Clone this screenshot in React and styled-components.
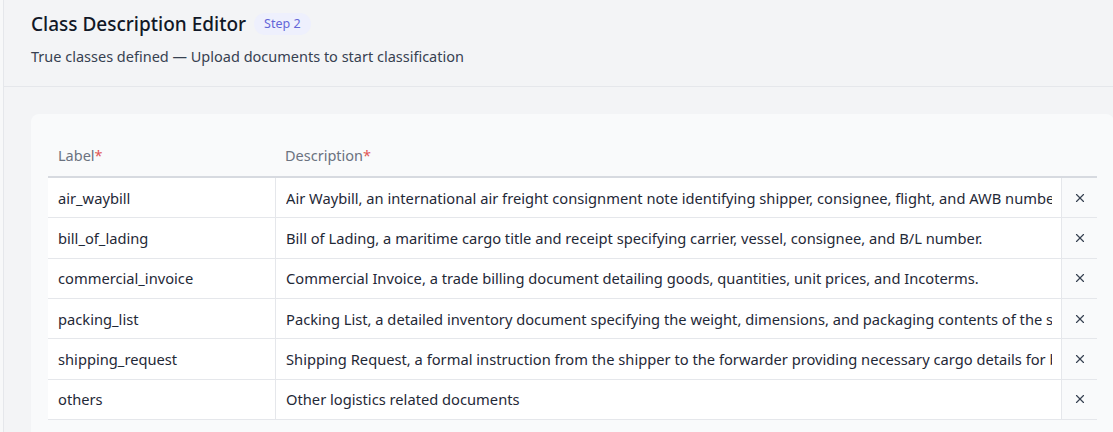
import React from 'react'
import styled, { createGlobalStyle } from 'styled-components'
import { X } from 'lucide-react'

const GlobalStyle = createGlobalStyle`
  html, body {
    margin: 0;
    padding: 0;
    background: #f3f4f6;
    overflow: hidden;
  }
  body {
    font-family: "Noto Sans", "Open Sans", sans-serif;
    color: #1f2937;
  }
`

const classes = [
  { label: 'air_waybill', description: 'Air Waybill, an international air freight consignment note identifying shipper, consignee, flight, and AWB number for tracking.' },
  { label: 'bill_of_lading', description: 'Bill of Lading, a maritime cargo title and receipt specifying carrier, vessel, consignee, and B/L number.' },
  { label: 'commercial_invoice', description: 'Commercial Invoice, a trade billing document detailing goods, quantities, unit prices, and Incoterms.' },
  { label: 'packing_list', description: 'Packing List, a detailed inventory document specifying the weight, dimensions, and packaging contents of the shipment.' },
  { label: 'shipping_request', description: 'Shipping Request, a formal instruction from the shipper to the forwarder providing necessary cargo details for booking.' },
  { label: 'others', description: 'Other logistics related documents' },
]

let Page, Side, Main, Header, TitleRow, Title, Badge, Subtitle, Body, Card, Table, HeadRow, HeadCell, Req, Row, Cell, CellText, RemoveCell, RemoveButton

const App = () => (<Page>
  <GlobalStyle />
  <Side />
  <Main>
    <Header>
      <TitleRow>
        <Title>Class Description Editor</Title>
        <Badge>Step 2</Badge>
      </TitleRow>
      <Subtitle>True classes defined — Upload documents to start classification</Subtitle>
    </Header>
    <Body>
      <Card>
        <Table>
          <HeadRow>
            <HeadCell>Label<Req>*</Req></HeadCell>
            <HeadCell>Description<Req>*</Req></HeadCell>
            <HeadCell />
          </HeadRow>
          {classes.map(c => (
            <Row key={c.label}>
              <Cell>
                <CellText>{c.label}</CellText>
              </Cell>
              <Cell $divided>
                <CellText>{c.description}</CellText>
              </Cell>
              <RemoveCell>
                <RemoveButton aria-label={`Remove ${c.label}`}>
                  <X size={14} strokeWidth={2} />
                </RemoveButton>
              </RemoveCell>
            </Row>
          ))}
        </Table>
      </Card>
    </Body>
  </Main>
</Page>)

Page = styled.div`
  display: flex;
  min-height: 432px;
`
Side = styled.div`
  width: 3px;
  flex-shrink: 0;
  background: #f7f8f9;
  border-right: 1px solid #e5e7eb;
`
Main = styled.div`
  flex: 1;
  min-width: 0;
`
Header = styled.div`
  padding: 11px 27px 0;
  height: 75px;
  border-bottom: 1px solid #e5e7eb;
`
TitleRow = styled.div`
  display: flex;
  align-items: center;
  gap: 8px;
`
Title = styled.h1`
  margin: 0;
  font-size: 19px;
  font-weight: 500;
  line-height: 26px;
  color: #111827;
`
Badge = styled.span`
  padding: 0 10px;
  height: 22px;
  line-height: 22px;
  border-radius: 11px;
  background: #eef0fd;
  color: #6366d8;
  font-size: 12.5px;
`
Subtitle = styled.p`
  margin: 8px 0 0;
  font-size: 14.5px;
  line-height: 22px;
  color: #374151;
`
Body = styled.div`
  padding: 27px 0 0 27px;
`
Card = styled.div`
  width: 1083px;
  padding: 21px 17px 24px;
  box-sizing: border-box;
  background: #f9fafb;
  border-radius: 8px;
`
Table = styled.div`
  display: grid;
  grid-template-columns: 227px 786px 36px;
`
HeadRow = styled.div`
  display: contents;
`
HeadCell = styled.div`
  height: 43px;
  box-sizing: border-box;
  padding: 0 10px 2px;
  display: flex;
  align-items: center;
  font-size: 14.5px;
  color: #6b7280;
  border-bottom: 2px solid #d7dae0;
`
Req = styled.span`
  color: #e05555;
`
Row = styled.div`
  display: contents;
`
Cell = styled.div`
  height: 40.33px;
  box-sizing: border-box;
  padding: 0 9px 0 10px;
  display: flex;
  align-items: center;
  background: #ffffff;
  border-bottom: 1px solid #e5e7eb;
  border-left: ${p => p.$divided ? '1px solid #e5e7eb' : 'none'};
`
CellText = styled.span`
  flex: 1;
  min-width: 0;
  overflow: hidden;
  white-space: nowrap;
  font-size: 14.7px;
  color: #1f2937;
`
RemoveCell = styled.div`
  height: 40.33px;
  box-sizing: border-box;
  display: flex;
  align-items: center;
  justify-content: center;
  border-left: 1px solid #e5e7eb;
  border-bottom: 1px solid #e5e7eb;
`
RemoveButton = styled.button`
  border: 0;
  background: none;
  padding: 0;
  display: flex;
  color: #374151;
  cursor: pointer;
`

export default App
